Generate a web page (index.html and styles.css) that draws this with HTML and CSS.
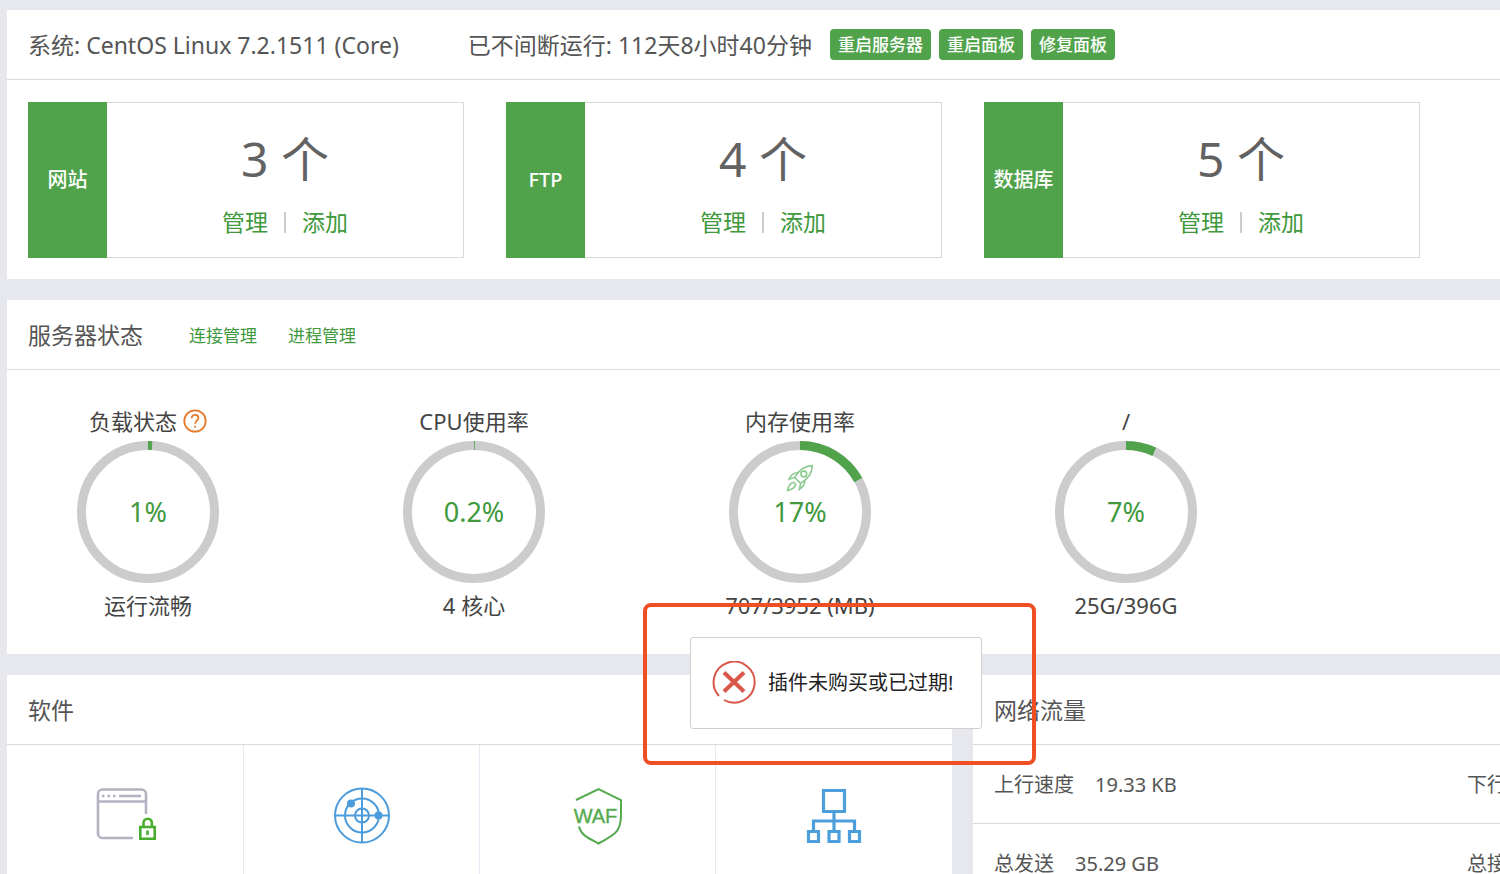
FILE: index.html
```html
<!DOCTYPE html>
<html lang="zh-CN">
<head>
<meta charset="utf-8">
<title>服务器面板</title>
<link rel="stylesheet" href="styles.css">
</head>
<body>
<main class="page">
  <section class="panel">
    <header class="panel-head">
      <span class="system">系统: CentOS Linux 7.2.1511 (Core)</span>
      <span class="uptime">已不间断运行: 112天8小时40分钟</span>
      <div class="actions">
        <button class="btn" type="button">重启服务器</button>
        <button class="btn" type="button">重启面板</button>
        <button class="btn" type="button">修复面板</button>
      </div>
    </header>
    <div class="cards">
      <article class="card">
        <h2 class="card-name">网站</h2>
        <div class="card-body">
          <p class="card-count">3 个</p>
          <nav class="card-links"><a href="#">管理</a><i class="sep"></i><a href="#">添加</a></nav>
        </div>
      </article>
      <article class="card">
        <h2 class="card-name">FTP</h2>
        <div class="card-body">
          <p class="card-count">4 个</p>
          <nav class="card-links"><a href="#">管理</a><i class="sep"></i><a href="#">添加</a></nav>
        </div>
      </article>
      <article class="card">
        <h2 class="card-name">数据库</h2>
        <div class="card-body">
          <p class="card-count">5 个</p>
          <nav class="card-links"><a href="#">管理</a><i class="sep"></i><a href="#">添加</a></nav>
        </div>
      </article>
    </div>
  </section>

  <section class="panel">
    <header class="panel-head">
      <h2 class="panel-title">服务器状态</h2>
      <nav class="head-links"><a href="#">连接管理</a><a href="#">进程管理</a></nav>
    </header>
    <div class="gauges">
      <div class="gauge">
        <h3 class="gauge-name">负载状态
          <svg class="help" viewBox="0 0 24 24" aria-hidden="true"><circle cx="12" cy="12" r="10.7"/><path d="M8.600 9.300c0-2.100 1.400-3.400 3.400-3.400s3.400 1.200 3.400 3.100c0 2.400-3.300 2.900-3.300 5.700"/><path d="M12.100 16.700v2"/></svg>
        </h3>
        <div class="dial">
          <svg class="ring" viewBox="0 0 142 142"><circle class="track" cx="71" cy="71" r="66.5"/><circle class="value" cx="71" cy="71" r="66.5" pathLength="100" stroke-dasharray="1 99"/></svg>
          <span class="dial-value">1%</span>
        </div>
        <p class="gauge-note">运行流畅</p>
      </div>
      <div class="gauge">
        <h3 class="gauge-name">CPU使用率</h3>
        <div class="dial">
          <svg class="ring" viewBox="0 0 142 142"><circle class="track" cx="71" cy="71" r="66.5"/><circle class="value" cx="71" cy="71" r="66.5" pathLength="100" stroke-dasharray="0.2 99.8"/></svg>
          <span class="dial-value">0.2%</span>
        </div>
        <p class="gauge-note">4 核心</p>
      </div>
      <div class="gauge">
        <h3 class="gauge-name">内存使用率</h3>
        <div class="dial">
          <svg class="ring" viewBox="0 0 142 142"><circle class="track" cx="71" cy="71" r="66.5"/><circle class="value" cx="71" cy="71" r="66.5" pathLength="100" stroke-dasharray="17 83"/></svg>
          <svg class="rocket" viewBox="0 0 28 28" aria-hidden="true"><path d="M26.300 1.600C19 2 13 5.500 8.800 13.500l5.900 5.900C22.500 14.500 26.300 9.500 26.300 1.600z"/><circle cx="17.800" cy="10" r="2.900"/><path d="M12 8.800C8 8.500 5 11 3 15.300l5.800-1.800M18.800 16.500c.1 4-1.800 6.500-5.500 8.800l1.400-5.900M7.500 18.300c-3.200.8-5 3.200-6 8.200 4.600-1 7.600-2.800 8.200-6z"/></svg>
          <span class="dial-value">17%</span>
        </div>
        <p class="gauge-note">707/3952 (MB)</p>
      </div>
      <div class="gauge">
        <h3 class="gauge-name">/</h3>
        <div class="dial">
          <svg class="ring" viewBox="0 0 142 142"><circle class="track" cx="71" cy="71" r="66.5"/><circle class="value" cx="71" cy="71" r="66.5" pathLength="100" stroke-dasharray="7 93"/></svg>
          <span class="dial-value">7%</span>
        </div>
        <p class="gauge-note">25G/396G</p>
      </div>
    </div>
  </section>

  <div class="bottom">
    <section class="panel software">
      <header class="panel-head"><h2 class="panel-title">软件</h2></header>
      <div class="apps">
        <a class="app" href="#" aria-label="防篡改">
          <svg class="icon" viewBox="0 0 62 58" fill="none">
            <g stroke="#b5b1c3" stroke-width="2.600"><path d="M51 27V7a4.500 4.500 0 0 0-4.500-4.500h-39A4.500 4.500 0 0 0 3 7v39.500a4.500 4.500 0 0 0 4.500 4.500H38M3 14.500h48"/><path d="M24 9h22M7 9h2.500M12.500 9H15M18 9h2.500"/></g>
            <g stroke="#46ad2d" stroke-width="2.600"><path d="M45.300 40h14.400v11.700H45.300zM48.500 39.500V36a4.200 4.200 0 0 1 8.400 0v3.500M52.500 43.500V48"/></g>
          </svg>
        </a>
        <a class="app" href="#" aria-label="网站监控">
          <svg class="icon" viewBox="0 0 62 58" fill="none" stroke="#4c9bdb" stroke-width="2">
            <circle cx="31" cy="28.500" r="27"/><circle cx="31" cy="28.500" r="17"/><circle cx="31" cy="28.500" r="7"/><path d="M31 1.500v54M4 28.500h54"/><circle cx="20" cy="16.500" r="3" fill="#4c9bdb"/><circle cx="47.500" cy="28.500" r="3" fill="#4c9bdb"/>
          </svg>
        </a>
        <a class="app" href="#" aria-label="网站防火墙">
          <svg class="icon" viewBox="0 0 62 58" fill="none" stroke="#55aa50" stroke-width="2">
            <path d="M9 13L31.500 2 54 13v14c0 16-3 19-22.500 29.500C20 50.500 14 48 12 39.500"/>
            <text class="waf" x="28.500" y="36">WAF</text>
          </svg>
        </a>
        <a class="app" href="#" aria-label="负载均衡">
          <svg class="icon" viewBox="0 0 62 58" fill="none" stroke="#4c9fdb" stroke-width="3.200">
            <path d="M20.500 3.500h21v21h-21zM31 25v18M10.500 43v-9h41v9M5.500 44.500h10v10h-10zM26 44.500h10v10H26zM46.500 44.500h10v10h-10z"/>
          </svg>
        </a>
      </div>
    </section>
    <section class="panel">
      <header class="panel-head"><h2 class="panel-title">网络流量</h2></header>
      <dl class="traffic">
        <div class="traffic-row">
          <div class="metric"><dt>上行速度</dt><dd>19.33 KB</dd></div>
          <div class="metric"><dt>下行速度</dt></div>
        </div>
        <div class="traffic-row">
          <div class="metric"><dt>总发送</dt><dd>35.29 GB</dd></div>
          <div class="metric"><dt>总接收</dt></div>
        </div>
      </dl>
    </section>
  </div>
</main>

<div class="highlight">
  <div class="toast" role="alert">
    <svg class="toast-icon" viewBox="0 0 44 44" aria-hidden="true"><path d="M7 35A20.500 20.500 0 1 1 12 39"/><path class="cross" d="M12 11.500l20 19M32 11.500l-20 19"/></svg>
    <span>插件未购买或已过期!</span>
  </div>
</div>
</body>
</html>
```
FILE: styles.css
```css
* { box-sizing: border-box; }
html { height: 100%; overflow: hidden; }
body {
  margin: 0;
  height: 100%;
  overflow: hidden;
  position: relative;
  background: #e7e8ed;
  color: #555;
  font-family: "Noto Sans", "Noto Sans CJK SC", sans-serif;
  font-size: 20px;
  line-height: 30px;
}
h2, h3, p, dl, dd { margin: 0; font-weight: 400; }
a { color: #40993c; text-decoration: none; }

.page {
  display: flex;
  flex-direction: column;
  gap: 21px;
  height: 100%;
  padding: 10px 0 0 7px;
}
.panel { background: #fff; min-width: 0; flex-shrink: 0; }
.panel-head {
  display: flex;
  align-items: center;
  height: 70px;
  padding: 0 21px;
  border-bottom: 1px solid #dadada;
  font-size: 23px;
  white-space: nowrap;
}
.panel-title { font-size: 23px; }

.uptime { margin-left: 69px; }
.actions { display: flex; gap: 8px; margin-left: 18px; }
.btn {
  height: 31px;
  padding: 1px 8px 0;
  border: 0;
  border-radius: 4px;
  background: #50a34b;
  color: #fff;
  font: 500 17px/30px "Noto Sans", "Noto Sans CJK SC", sans-serif;
}

.cards {
  display: grid;
  grid-template-columns: repeat(3, minmax(0, 1fr));
  gap: 42px;
  padding: 22px 80px 21px 21px;
}
.card { display: flex; height: 156px; border: 1px solid #d9d9d9; border-left: 0; }
.card-name {
  display: flex;
  align-items: center;
  justify-content: center;
  width: 79px;
  margin: -1px 0;
  background: #50a34b;
  color: #fff;
  font-size: 20px;
  font-weight: 500;
}
.card-body { flex: 1; padding-top: 20px; text-align: center; }
.card-count { color: #626262; font-size: 48px; line-height: 72px; }
.card-links {
  display: flex;
  align-items: center;
  justify-content: center;
  gap: 16px;
  padding-top: 12px;
  font-size: 23px;
}
.sep { width: 2px; height: 21px; background: #ccc; }

.head-links { display: flex; gap: 31px; margin-left: 46px; padding-top: 3px; font-size: 17px; }

.gauges {
  display: grid;
  grid-template-columns: repeat(4, minmax(0, 1fr));
  gap: 86px;
  padding: 35px 254px 33px 21px;
  color: #444;
}
.gauge { display: flex; flex-direction: column; align-items: center; }
.gauge-name { display: flex; align-items: center; gap: 6px; height: 32px; font-size: 22px; }
.gauge-note { height: 32px; font-size: 22px; line-height: 32px; }
.help { width: 24px; height: 24px; fill: none; stroke: #e57a2a; stroke-width: 1.800; }
.dial {
  display: grid;
  place-items: center;
  position: relative;
  width: 142px;
  height: 142px;
  margin: 4px 0 6px;
}
.ring { position: absolute; inset: 0; fill: none; stroke-width: 9; transform: rotate(-90deg); }
.track { stroke: #ccc; }
.value { stroke: #50a34b; }
.rocket {
  position: absolute;
  top: 23px;
  left: 57px;
  width: 28px;
  height: 28px;
  fill: none;
  stroke: #8dca90;
  stroke-width: 1.600;
}
.dial-value { color: #40993c; font-size: 27px; }

.bottom {
  display: grid;
  grid-template-columns: minmax(0, 945fr) minmax(0, 527fr);
  gap: 21px;
  flex: 1 0 auto;
}
.software { display: flex; flex-direction: column; }
.apps { display: grid; grid-template-columns: repeat(4, 1fr); flex: 1; padding-left: 1px; }
.app { display: flex; justify-content: center; padding-top: 42px; border-right: 1px solid #e9e8f5; }
.app:last-child { border-right: 0; }
.icon { width: 62px; height: 58px; }
.waf {
  fill: #55aa50;
  stroke: #55aa50;
  stroke-width: 0.400;
  text-anchor: middle;
  font: 20px "Liberation Sans", sans-serif;
}

.traffic-row { display: flex; height: 79px; padding: 2px 21px 0; border-bottom: 1px solid #dadada; overflow: hidden; }
.metric { display: flex; flex: 0 0 473px; align-items: center; gap: 21px; white-space: nowrap; }

.highlight {
  position: absolute;
  left: 643px;
  top: 603px;
  padding: 30px 50px 32px 43px;
  border: 4px solid #f04e23;
  border-radius: 8px;
}
.toast {
  display: flex;
  align-items: center;
  gap: 12px;
  height: 92px;
  padding: 0 28px 0 21px;
  border: 1px solid #d0d0d0;
  border-radius: 3px;
  background: #fff;
  color: #222;
  white-space: nowrap;
}
.toast-icon { width: 44px; height: 44px; fill: none; stroke: #d9564a; stroke-width: 2; }
.cross { stroke-width: 4; }
```
